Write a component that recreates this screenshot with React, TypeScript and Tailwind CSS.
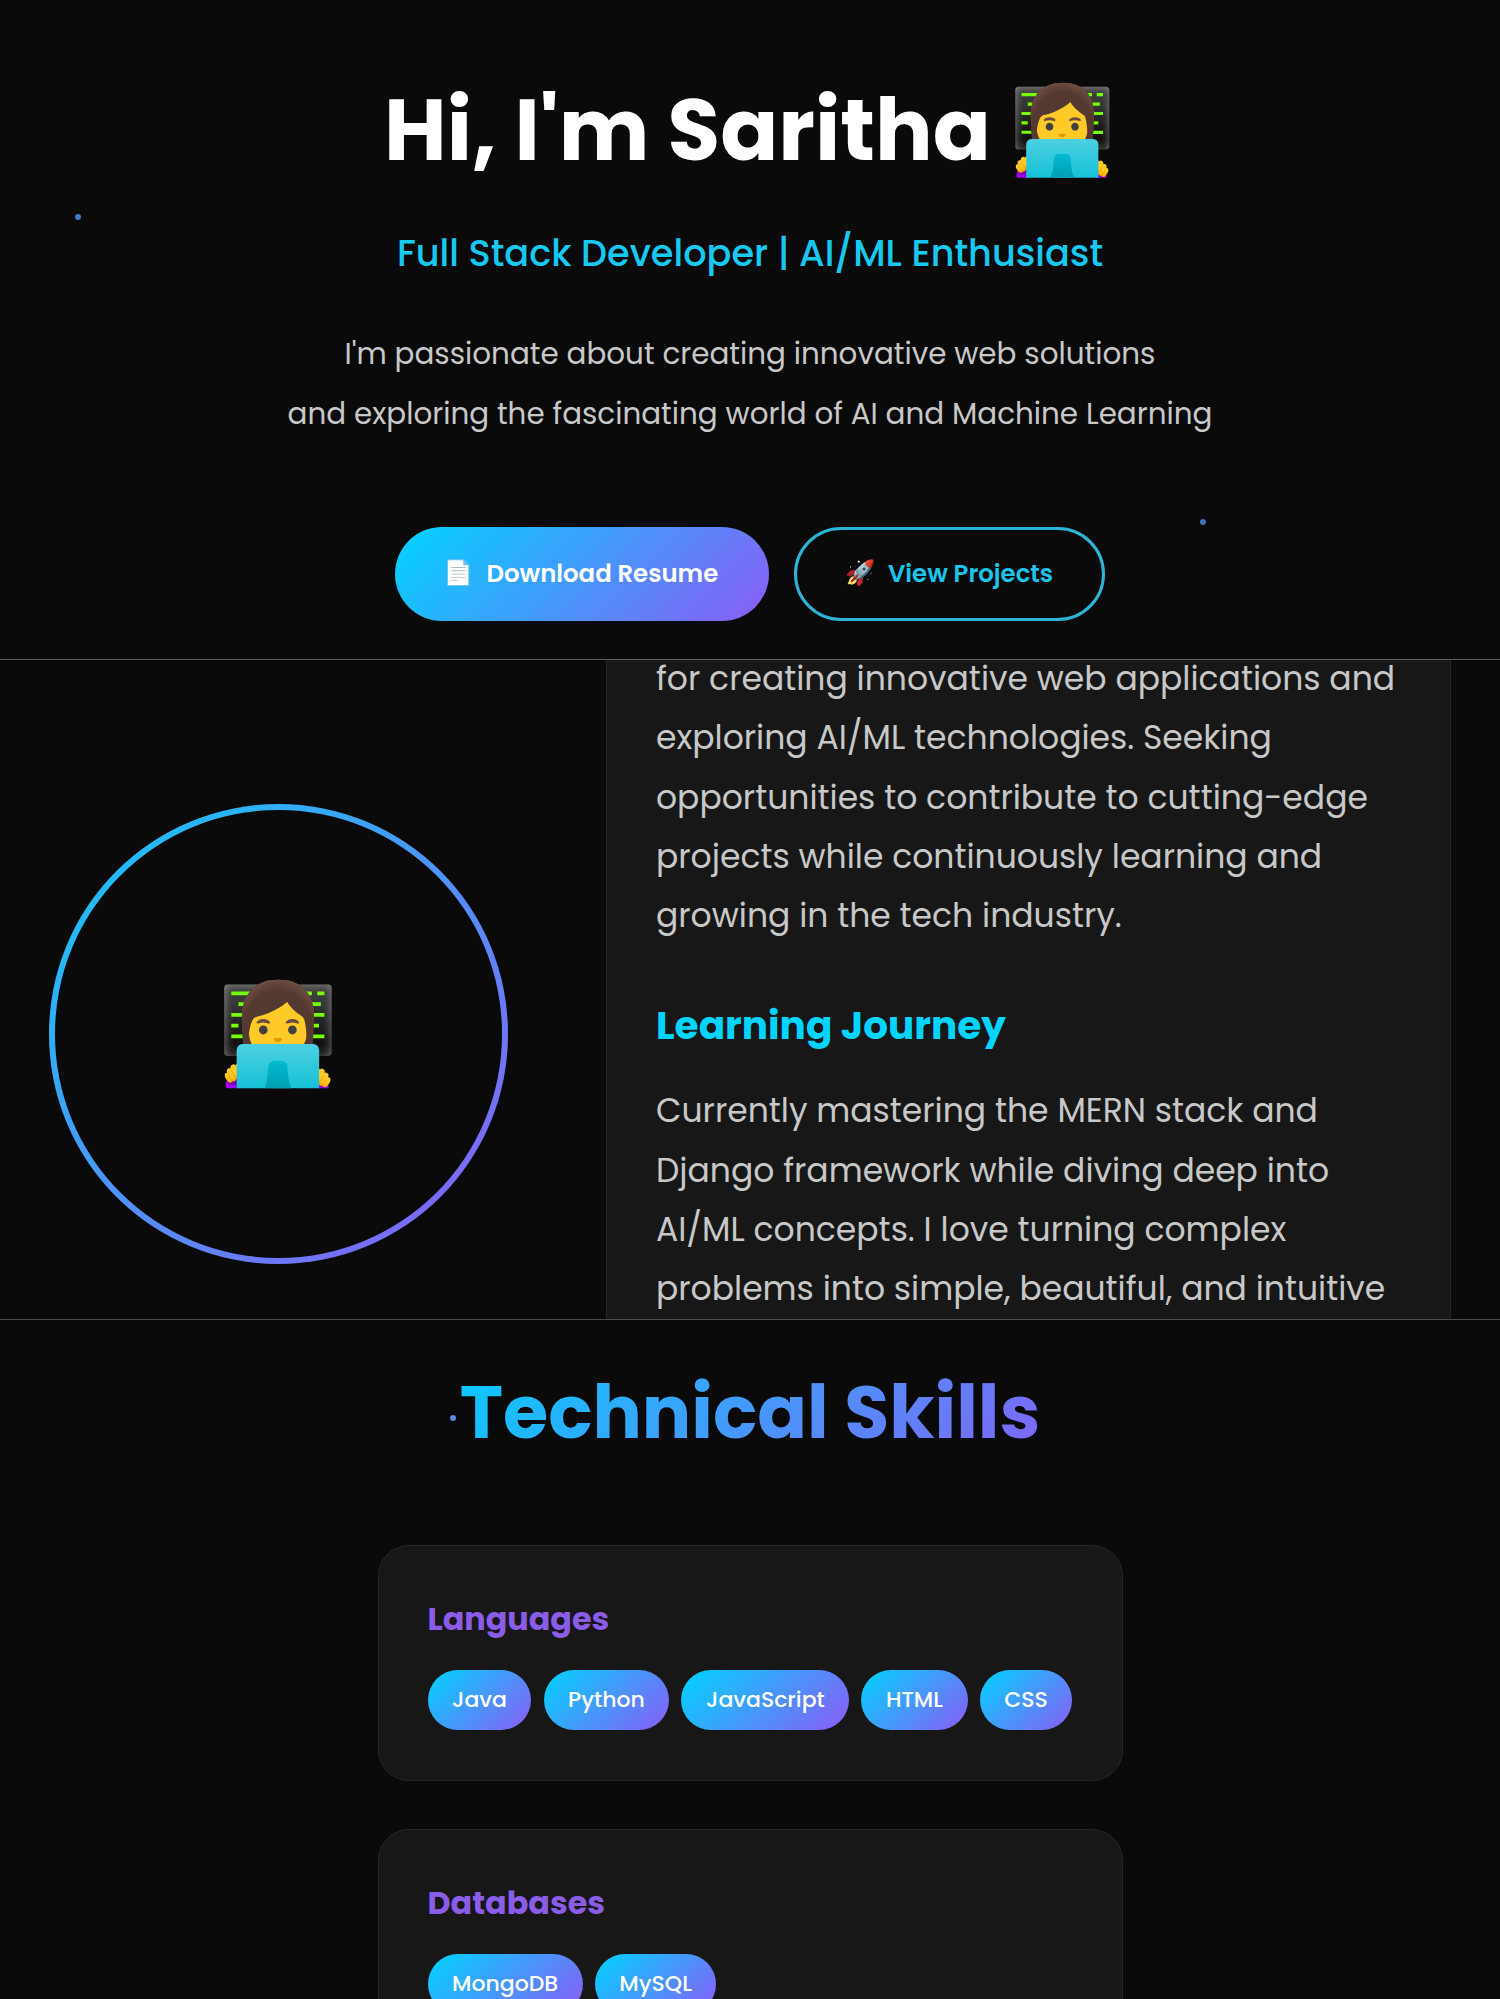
const introLines = [
  "for creating innovative web applications and",
  "exploring AI/ML technologies. Seeking",
  "opportunities to contribute to cutting-edge",
  "projects while continuously learning and",
  "growing in the tech industry.",
];

const journeyLines = [
  "Currently mastering the MERN stack and",
  "Django framework while diving deep into",
  "AI/ML concepts. I love turning complex",
  "problems into simple, beautiful, and intuitive",
];

function Paragraph({ lines }: { lines: string[] }) {
  return (
    <p className="text-[33px] leading-[59.4px] text-[#c8c8c8]">
      {lines.map((line) => (
        <span key={line} className="block whitespace-nowrap">
          {line}
        </span>
      ))}
    </p>
  );
}

function SkillCard({ title, skills }: { title: string; skills: string[] }) {
  return (
    <div className="h-[235.5px] w-[745px] shrink-0 rounded-[31px] border border-[#262626] bg-[#171717] px-[49px] pt-[54px]">
      <h3 className="text-[31.8px] leading-[38px] font-bold text-[#8b5ce8]">{title}</h3>
      <div className="mt-8 flex gap-[12.2px]">
        {skills.map((skill) => (
          <span
            key={skill}
            className="flex h-[60px] shrink-0 items-center justify-center rounded-full bg-[linear-gradient(135deg,#00d4ff,#8b5cf6)] px-[24.5px] pb-px text-[22px] font-medium text-white"
          >
            {skill}
          </span>
        ))}
      </div>
    </div>
  );
}

export default function App() {
  return (
    <main className="relative h-[1999px] w-[1500px] overflow-hidden bg-[#0a0a0a] font-['Poppins','Inter',sans-serif] text-white">
      <section className="flex h-[660px] flex-col items-center border-b border-[#606060] pt-20">
        <h1 className="h-[100px] text-[85.6px] leading-[100px] font-bold whitespace-nowrap">Hi, I'm Saritha 👩‍💻</h1>
        <h2 className="mt-[50.5px] text-[36.7px] leading-[44px] font-medium whitespace-nowrap text-[#17c8f0]">
          Full Stack Developer | AI/ML Enthusiast
        </h2>
        <p className="mt-[49px] text-center text-[29.4px] leading-[60px] whitespace-nowrap text-[#c8c8c8]">
          <span className="block">I'm passionate about creating innovative web solutions</span>
          <span className="block">and exploring the fascinating world of AI and Machine Learning</span>
        </p>
        <div className="mt-[83px] flex gap-[24.5px] text-[24.4px] font-semibold whitespace-nowrap">
          <a className="flex h-[94px] w-[374px] items-center gap-[13.5px] rounded-full bg-[linear-gradient(135deg,#00d4ff,#8b5cf6)] pl-12">
            <span>📄</span>
            <span className="pt-[2px]">Download Resume</span>
          </a>
          <a className="flex h-[94px] w-[311.5px] items-center gap-[13.5px] rounded-full border-[3px] border-[#2cb4d8] pl-12 text-[#1cc4ec]">
            <span>🚀</span>
            <span className="pt-[2px]">View Projects</span>
          </a>
        </div>
      </section>

      <section className="flex h-[660px] overflow-hidden border-b border-[#4c4c4c]">
        <div className="mt-[144px] ml-[48.5px] h-[460px] w-[459.5px] shrink-0 rounded-full bg-[linear-gradient(135deg,#12caf7,#8b5cf6)] p-[6px]">
          <div className="flex h-full w-full items-center justify-center rounded-full bg-[#0a0a0a] text-[97.8px] leading-none">
            👩‍💻
          </div>
        </div>
        <div className="ml-[98px] w-[845px] shrink-0 border-x border-[#242424] bg-[#171717] pl-[49px]">
          <div className="-mt-[11.3px]">
            <Paragraph lines={introLines} />
          </div>
          <h3 className="mt-[56.5px] mb-[31px] text-[39px] leading-[48px] font-bold text-[#00d4ff]">Learning Journey</h3>
          <Paragraph lines={journeyLines} />
        </div>
      </section>

      <section className="flex h-[679px] flex-col items-center overflow-hidden pt-[49px]">
        <h2 className="bg-[linear-gradient(135deg,#00d4ff,#8b5cf6)] bg-clip-text px-16 text-[73.3px] leading-[88px] font-bold whitespace-nowrap text-transparent">
          Technical Skills
        </h2>
        <div className="mt-[88px] flex flex-col gap-[48.5px]">
          <SkillCard title="Languages" skills={["Java", "Python", "JavaScript", "HTML", "CSS"]} />
          <SkillCard title="Databases" skills={["MongoDB", "MySQL"]} />
        </div>
      </section>

      <i className="absolute top-[214px] left-[75px] size-[6px] rounded-full bg-[#3a7fc8]" />
      <i className="absolute top-[519px] left-[1200px] size-[6px] rounded-full bg-[#4272bd]" />
      <i className="absolute top-[1415px] left-[450px] size-[6px] rounded-full bg-[#5a8ae0]" />
    </main>
  );
}
